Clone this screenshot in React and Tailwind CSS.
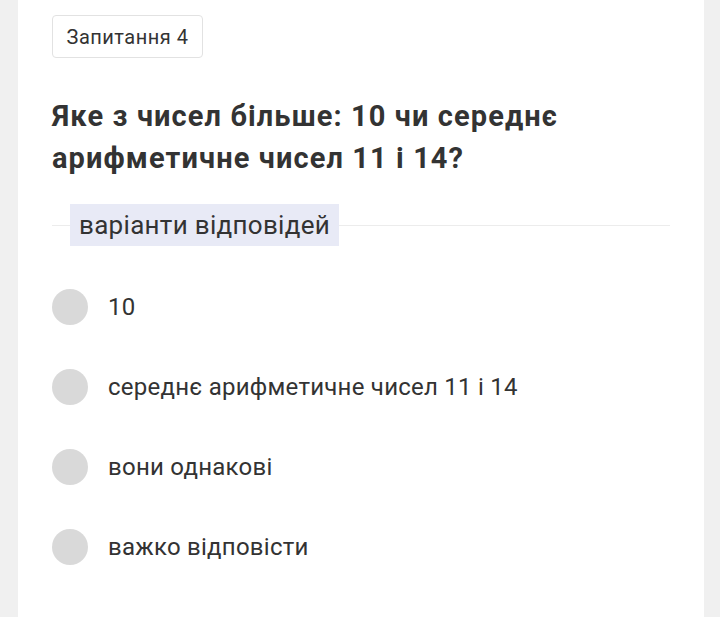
import React from "react";

const options = [
  "10",
  "середнє арифметичне чисел 11 і 14",
  "вони однакові",
  "важко відповісти",
];

export default function App() {
  return (
    <div
      className="min-h-[617px] bg-[#f0f0f0] pl-[18px] pr-[16px]"
      style={{ fontFamily: "Roboto, 'Noto Sans', sans-serif" }}
    >
      <div className="min-h-[617px] w-[686px] bg-white px-[34px] pt-[15px]">
        {/* Question number */}
        <div className="inline-flex h-[43px] w-[151px] items-center justify-center rounded-[4px] border border-[#e2e2e2] text-[20px] tracking-[0.5px] text-[#333]">
          Запитання 4
        </div>

        {/* Question text */}
        <h1 className="mt-[37px] text-[29px] font-bold leading-[42px] tracking-[1.1px] text-[#333]">
          Яке з чисел більше: 10 чи середнє
          <br />
          арифметичне чисел 11 і 14?
        </h1>

        {/* Divider with label */}
        <div className="relative mt-[25px] flex h-[42px] items-center">
          <div className="absolute left-0 right-0 top-[21px] h-px bg-[#ececec]" />
          <span className="relative ml-[18px] bg-[#e8eaf6] px-[9px] text-[26px] leading-[42px] tracking-[0.3px] text-[#333]">
            варіанти відповідей
          </span>
        </div>

        {/* Answers */}
        <div className="mt-[21px] flex flex-col">
          {options.map((opt) => (
            <div key={opt} className="flex h-[80px] items-center gap-[20px]">
              <div className="h-[36px] w-[36px] shrink-0 rounded-full bg-[#d9d9d9]" />
              <span className="text-[24px] tracking-[0.25px] text-[#333]">{opt}</span>
            </div>
          ))}
        </div>
      </div>
    </div>
  );
}
